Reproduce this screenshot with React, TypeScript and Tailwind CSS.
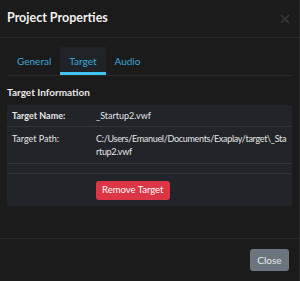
import React from 'react';

export default function App() {
  return (
    <div className="w-[300px] h-[281px] bg-[#1b1b1b] text-[#e6e6e6] flex flex-col border-r border-[#2a2a2a]" style={{ fontFamily: 'Lato, "Liberation Sans", sans-serif' }}>
      {/* Header */}
      <div className="h-[38px] flex items-center justify-between pl-[7px] pr-[9px] border-b border-[#2b2b2b]">
        <h3 className="text-[12.5px] font-bold text-[#f0f0f0]">Project Properties</h3>
        <svg width="10" height="10" viewBox="0 0 10 10" className="text-[#3a3a3a]">
          <path d="M1 1 L9 9 M9 1 L1 9" stroke="currentColor" strokeWidth="1.4" />
        </svg>
      </div>

      {/* Body */}
      <div className="flex-1 px-[7px] pt-[9px]">
        <div className="flex border-b border-[#2a2a2a] h-[29px] pl-[1px]">
          <button className="px-[9px] text-[10px] text-[#3aa8d6]">General</button>
          <button className="px-[9px] text-[10px] text-[#3aa8d6] bg-[#1f2328] border-b-[3px] border-[#3ec3f2] pt-[3px]">Target</button>
          <button className="px-[9px] text-[10px] text-[#3aa8d6]">Audio</button>
        </div>

        <h4 className="mt-[9px] text-[10px] font-bold text-[#e8e8e8]">Target Information</h4>

        <div className="mt-[5px] bg-[#212428] text-[9px]">
          <div className="flex border-b border-[#30353a] h-[22px] items-center">
            <div className="w-[89px] pl-[5px] font-bold">Target Name:</div>
            <div>_Startup2.vwf</div>
          </div>
          <div className="flex border-b border-[#30353a] py-[5px]">
            <div className="w-[89px] pl-[5px] shrink-0">Target Path:</div>
            <div className="w-[192px] break-all leading-[13px] tracking-[-0.3px]">C:/Users/Emanuel/Documents/Exaplay/target\_Startup2.vwf</div>
          </div>
          <div className="border-b border-[#30353a] h-[10px]" />
          <div className="flex h-[32px] items-center">
            <div className="w-[89px]" />
            <button className="bg-[#dc3545] text-white text-[9.5px] px-[6px] h-[19px] rounded-[3px]">Remove Target</button>
          </div>
        </div>
      </div>

      {/* Footer */}
      <div className="h-[43px] border-t border-[#2a2a2a] flex items-center justify-end pr-[10px]">
        <button className="bg-[#6c757d] text-[#e8e8e8] text-[10px] w-[39px] h-[22px] rounded-[3px]">Close</button>
      </div>
    </div>
  );
}
